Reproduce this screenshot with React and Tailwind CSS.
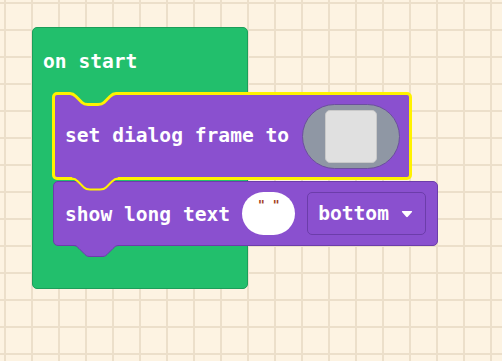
const font = "font-['DejaVu_Sans_Mono',monospace] font-bold text-[19.6px] leading-none text-white";

// tab shape shared by notches and tabs (46px wide, 11px deep, starts at y=1.5)
const TAB = 'M0 1.5 C3 1.5 4 2.5 6 4.5 L12 10.5 C14 12.5 15 12.5 18 12.5 L28 12.5 C31 12.5 32 12.5 34 10.5 L40 4.5 C42 2.5 43 1.5 46 1.5';

function Tab({ fill, stroke, strokeWidth, className }) {
  return (
    <svg width="46" height="16" viewBox="0 0 46 16" className={className} overflow="visible">
      <path d={`M0 0 L0 1.5 ${TAB.slice(8)} L46 0 Z`} fill={fill} />
      <path d={TAB} fill="none" stroke={stroke} strokeWidth={strokeWidth} />
    </svg>
  );
}

function SetFrameBlock() {
  return (
    <div className="relative z-10 flex h-[88px] w-max items-center gap-[13px] rounded-[5px] border-[3px] border-[#fff200] bg-[#8a50cf] pl-[10px] pr-[9px]">
      <Tab fill="#22bf6c" stroke="#fff200" strokeWidth="3" className="absolute left-[15px] top-[-3px]" />
      <Tab fill="#8a50cf" stroke="#fff200" strokeWidth="2" className="absolute left-[17px] top-full" />
      <span className={font}>set dialog frame to</span>
      <div className="flex h-[65px] w-[98px] items-center justify-center rounded-full border border-[#6c4f9e] bg-[#8f97a4]">
        <div className="h-[53px] w-[52px] rounded-[5px] border border-[#c9c9c9] bg-[#e0e0e0]" />
      </div>
    </div>
  );
}

function ShowTextBlock() {
  return (
    <div className="relative ml-px flex h-[65px] w-max items-center rounded-[5px] border border-[#6c3daa] bg-[#8a50cf] pl-[11px] pr-[11px]">
      <Tab fill="#8a50cf" stroke="#6c3daa" strokeWidth="1" className="absolute left-[19px] top-[calc(100%-1px)]" />
      <span className={`${font} pt-[2px]`}>show long text</span>
      <div className="ml-[12px] flex h-[43px] w-[53px] justify-center gap-[8px] rounded-full bg-white pt-[6px]">
        <span className="font-['DejaVu_Sans',sans-serif] text-[13px] font-bold leading-none text-[#a3401c]">"</span>
        <span className="font-['DejaVu_Sans',sans-serif] text-[13px] font-bold leading-none text-[#a3401c]">"</span>
      </div>
      <div className="ml-[12px] flex h-[43px] w-[119px] items-center gap-[12px] rounded-[5px] border border-[#6c3daa] bg-[#8a50cf] pl-[10px]">
        <span className={font}>bottom</span>
        <svg width="12" height="8" viewBox="0 0 12 8">
          <path d="M1.5 1 L10.5 1 Q11.5 1 11 2 L6.8 6.8 Q6 7.6 5.2 6.8 L1 2 Q0.5 1 1.5 1 Z" fill="white" />
        </svg>
      </div>
    </div>
  );
}

export default function App() {
  return (
    <div className="h-[361px] w-[502px] overflow-hidden bg-[#fdf3e2] bg-[linear-gradient(to_right,#ecdfca_2px,transparent_2px),linear-gradient(to_bottom,#ecdfca_2px,transparent_2px)] bg-[size:27px_27px] bg-[position:4px_2px] pl-[32px] pt-[27px]">
      <div className="flex h-[262px] w-[216px] flex-col rounded-[5px] border border-[#1c9e5a] bg-[#22bf6c]">
        <div className="flex h-[64px] items-start pl-[10px] pt-[24px]">
          <span className={font}>on start</span>
        </div>
        <div className="ml-[19px] flex flex-col gap-px">
          <SetFrameBlock />
          <ShowTextBlock />
        </div>
      </div>
    </div>
  );
}
